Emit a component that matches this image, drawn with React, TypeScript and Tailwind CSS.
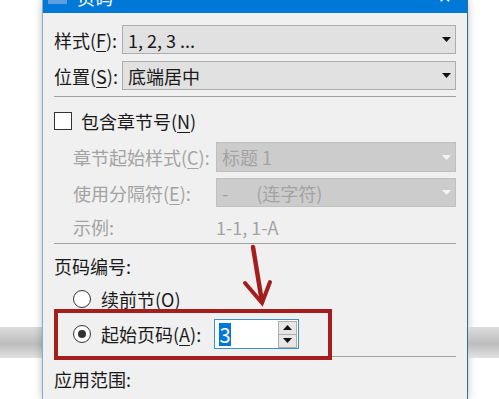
import React from "react";

const Arrow = ({ disabled = false }: { disabled?: boolean }) => (
  <svg width="9" height="5" viewBox="0 0 9 5" className="mr-[4px]">
    <path d="M0 0 L9 0 L4.5 5 Z" fill={disabled ? "#f4f4f4" : "#111111"} />
  </svg>
);

const Select = ({
  value,
  disabled = false,
  className = "",
}: {
  value: React.ReactNode;
  disabled?: boolean;
  className?: string;
}) => (
  <div
    className={
      "flex flex-1 items-center justify-between border pl-[5px] " +
      (disabled
        ? "bg-[#cccccc] border-[#bfbfbf] text-[#a3a3a3] "
        : "bg-[#e1e1e1] border-[#adadad] text-[#1a1a1a] ") +
      className
    }
  >
    <span className="leading-[20px]">{value}</span>
    <Arrow disabled={disabled} />
  </div>
);

const Key = ({ k }: { k: string }) => <span className="underline underline-offset-[3px]">{k}</span>;

const Radio = ({ checked = false }: { checked?: boolean }) => (
  <div className="w-[18px] h-[18px] rounded-full border border-[#333333] bg-white flex items-center justify-center">
    {checked && <div className="w-[8px] h-[8px] rounded-full bg-[#333333]" />}
  </div>
);

const Band = () => (
  <div className="h-[31px] bg-[linear-gradient(to_bottom,#dcdcdc,#bdbdbd_55%,#e2e2e2)]" />
);

export default function App() {
  return (
    <div className="relative w-[499px] h-[399px] overflow-hidden bg-white flex text-[18px] text-[#1a1a1a] font-['Noto_Sans_CJK_SC','Microsoft_YaHei',sans-serif]">
      <div className="w-[42px] flex flex-col">
        <div className="h-[327px]" />
        <Band />
      </div>

      <div className="w-[426px] h-[399px] flex flex-col bg-[#f0f0f0] border-l border-l-[#86acd0] border-r border-r-[#2f6f8f] shadow-[0_0_8px_rgba(0,0,0,0.25)]">
        <div className="h-[13px] bg-[#0078d7] overflow-hidden flex items-end shrink-0">
          <div className="w-[19px] h-[20px] ml-[5px] mb-[9px] bg-[#5c9fe0]" />
          <span className="ml-[10px] mb-[6px] text-white leading-[20px]">页码</span>
          <span className="ml-auto mr-[16px] mb-[7px] text-white text-[16px] leading-[20px]">✕</span>
        </div>

        <div className="flex flex-col pl-[11px] pr-[11px]">
          <div className="mt-[12px] h-[29px] flex items-center">
            <span className="w-[68px] leading-[20px]">
              样式(<Key k="F" />):
            </span>
            <Select value="1, 2, 3 ..." className="h-[29px]" />
          </div>
          <div className="mt-[7px] h-[29px] flex items-center">
            <span className="w-[68px] leading-[20px]">
              位置(<Key k="S" />):
            </span>
            <Select value="底端居中" className="h-[29px]" />
          </div>

          <div className="mt-[6px] h-px bg-[#a0a0a0]" />

          <div className="mt-[12px] h-[24px] flex items-center">
            <div className="w-[18px] h-[18px] border border-[#333333] bg-white" />
            <span className="ml-[9px] leading-[20px]">
              包含章节号(<Key k="N" />)
            </span>
          </div>

          <div className="pl-[19px] text-[#a3a3a3]">
            <div className="mt-[9px] h-[30px] flex items-center">
              <span className="w-[143px] leading-[20px]">
                章节起始样式(<Key k="C" />):
              </span>
              <Select value="标题 1" disabled className="h-[30px]" />
            </div>
            <div className="mt-[6px] h-[29px] flex items-center">
              <span className="w-[143px] leading-[20px]">
                使用分隔符(<Key k="E" />):
              </span>
              <Select
                value={
                  <span>
                    -<span className="ml-[28px]">(连字符)</span>
                  </span>
                }
                disabled
                className="h-[29px]"
              />
            </div>
            <div className="mt-[8px] h-[24px] flex items-center">
              <span className="w-[143px] leading-[20px]">示例:</span>
              <span className="leading-[20px]">1-1, 1-A</span>
            </div>
          </div>

          <div className="mt-[4px] h-px bg-[#a0a0a0]" />

          <div className="mt-[10px] h-[24px] flex items-center">
            <span className="leading-[20px]">页码编号:</span>
          </div>

          <div className="mt-[9px] h-[24px] flex items-center pl-[19px]">
            <Radio />
            <span className="ml-[10px] leading-[20px]">
              续前节(<Key k="O" />)
            </span>
          </div>

          <div className="relative mt-[8px] h-[30px] flex items-center pl-[19px]">
            <Radio checked />
            <span className="ml-[10px] w-[113px] leading-[20px]">
              起始页码(<Key k="A" />):
            </span>
            <div className="w-[85px] h-[30px] border border-[#3d8fd0] bg-white flex items-center pl-[4px] pr-[1px]">
              <span className="bg-[#0078d7] text-white h-[23px] w-[12px] flex items-center justify-center text-[20px] leading-[23px]">
                3
              </span>
              <div className="ml-auto w-[19px] h-[27px] flex flex-col border border-[#adadad] bg-[#e6e6e6]">
                <div className="flex-1 flex items-center justify-center border-b border-[#adadad]">
                  <svg width="9" height="5" viewBox="0 0 9 5">
                    <path d="M4.5 0 L9 5 L0 5 Z" fill="#111111" />
                  </svg>
                </div>
                <div className="flex-1 flex items-center justify-center">
                  <svg width="9" height="5" viewBox="0 0 9 5">
                    <path d="M0 0 L9 0 L4.5 5 Z" fill="#111111" />
                  </svg>
                </div>
              </div>
            </div>
            <div className="absolute z-10 -top-[10px] left-0 w-[278px] h-[51px] border-[4px] border-[#a51d1d]" />
          </div>

          <div className="mt-[7px] h-px bg-[#a0a0a0]" />

          <div className="mt-[10px] h-[24px] flex items-center">
            <span className="leading-[20px]">应用范围:</span>
          </div>
        </div>
      </div>

      <div className="flex-1 flex flex-col">
        <div className="h-[327px]" />
        <Band />
      </div>

      <svg
        className="absolute left-[240px] top-[240px]"
        width="40"
        height="70"
        viewBox="0 0 40 70"
      >
        <path
          d="M13 7 L22 62"
          stroke="#a51d1d"
          strokeWidth="4.5"
          strokeLinecap="round"
          fill="none"
        />
        <path
          d="M5 43 L22 63 L30 42"
          stroke="#a51d1d"
          strokeWidth="4"
          strokeLinecap="round"
          strokeLinejoin="miter"
          fill="none"
        />
      </svg>
    </div>
  );
}
